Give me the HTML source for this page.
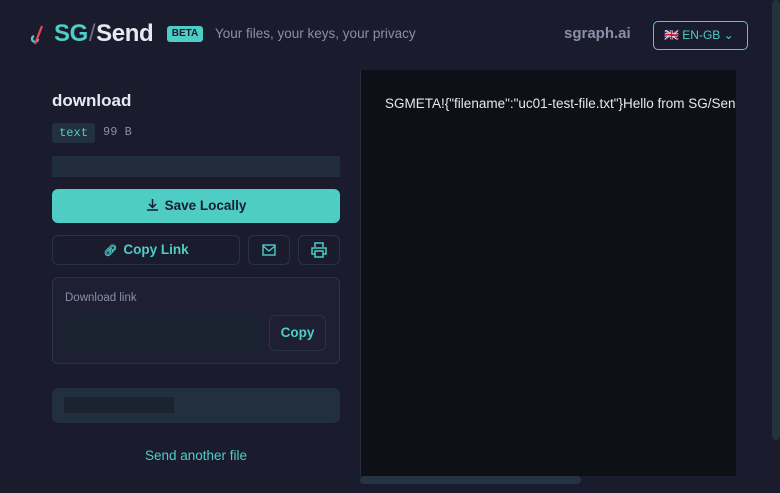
<!DOCTYPE html>
<html><head><style>
*{box-sizing:border-box;margin:0;padding:0}
body{width:780px;height:493px;overflow:hidden;background:#1b1b2e;font-family:"Liberation Sans",sans-serif;position:relative}
.a{position:absolute}
.btn{position:absolute;border:1px solid #283444;border-radius:6px}
</style></head><body>
<svg class="a" style="left:29px;top:23px" width="18" height="24" viewBox="0 0 18 24"><path d="M5 13a3 3 0 1 0 4 3" stroke="#4ecdc4" stroke-width="2.4" fill="none"/><path d="M13 3L6 21" stroke="#e94560" stroke-width="2.2"/></svg>
<div class="a" style="left:54px;top:20px;font-size:24px;font-weight:bold;color:#4ecdc4;letter-spacing:-0.4px">SG<span style="color:#6b7080;font-weight:normal;margin:0 1px">/</span><span style="color:#e8e8f0">Send</span></div>
<div class="a" style="left:167px;top:26px;width:36px;height:16px;background:#4ecdc4;border-radius:3px;color:#1b1b2e;font-size:10px;font-weight:bold;text-align:center;line-height:16px">BETA</div>
<div class="a" style="left:215px;top:26px;font-size:13.5px;color:#8a8fa8">Your files, your keys, your privacy</div>
<div class="a" style="left:564px;top:25px;font-size:15px;color:#8a8fa8;font-weight:bold">sgraph.ai</div>
<div class="a" style="left:653px;top:21px;width:95px;height:29px;border:1px solid #4ecdc4;border-radius:5px;color:#4ecdc4;font-size:12px;line-height:27px;padding-left:10px">🇬🇧 EN-GB ⌄</div>
<div class="a" style="left:772px;top:0;width:8px;height:440px;background:#243240;border-radius:4px"></div>
<div class="a" style="left:52px;top:91px;font-size:17px;font-weight:bold;color:#e8e8f0">download</div>
<div class="a" style="left:52px;top:123px;width:43px;height:20px;background:#223040;border-radius:3px;color:#4ecdc4;font:12px 'Liberation Mono',monospace;text-align:center;line-height:20px">text</div>
<div class="a" style="left:103px;top:125px;font:12px 'Liberation Mono',monospace;color:#8a8fa8">99 B</div>
<div class="a" style="left:52px;top:156px;width:288px;height:21px;background:#212d3c"></div>
<div class="a" style="left:52px;top:189px;width:288px;height:34px;background:#4ecdc4;border-radius:6px;color:#1b1b2e;font-size:13.5px;font-weight:bold;text-align:center;line-height:34px"><svg width="13" height="13" viewBox="0 0 13 13" style="vertical-align:-1px;margin-right:6px"><path d="M6.5 1v8M3 6l3.5 3.5L10 6M1 12h11" stroke="#1b1b2e" stroke-width="1.5" fill="none"/></svg>Save Locally</div>
<div class="btn" style="left:52px;top:235px;width:188px;height:30px;color:#4ecdc4;font-size:13.5px;font-weight:bold;text-align:center;line-height:28px"><span style="font-size:11px;margin-right:6px">🔗︎</span>Copy Link</div>
<div class="btn" style="left:248px;top:235px;width:42px;height:30px"><svg class="a" style="left:13px;top:8px" width="14" height="12" viewBox="0 0 14 12"><rect x="1" y="1" width="12" height="10" fill="none" stroke="#4ecdc4" stroke-width="1.4"/><path d="M1 2l6 5 6-5" fill="none" stroke="#4ecdc4" stroke-width="1.4"/></svg></div>
<div class="btn" style="left:298px;top:235px;width:42px;height:30px"><svg class="a" style="left:12px;top:6px" width="16" height="16" viewBox="0 0 16 16"><path d="M4 5V1h8v4M4 12H1V6h14v6h-3M4 9h8v6H4z" fill="none" stroke="#4ecdc4" stroke-width="1.5"/></svg></div>
<div class="btn" style="left:52px;top:277px;width:288px;height:87px;background:#1e1f32"></div>
<div class="a" style="left:65px;top:292px;font-size:11.5px;color:#8a8fa8">Download link</div>
<div class="a" style="left:65px;top:315px;width:196px;height:35px;background:#1b2230"></div>
<div class="btn" style="left:269px;top:315px;width:57px;height:36px;color:#4ecdc4;font-size:13.5px;font-weight:bold;text-align:center;line-height:34px">Copy</div>
<div class="a" style="left:52px;top:388px;width:288px;height:35px;background:#212f3e;border-radius:6px"></div>
<div class="a" style="left:64px;top:397px;width:110px;height:16px;background:#1b2330"></div>
<div class="a" style="left:52px;top:448px;width:288px;text-align:center;font-size:13.5px;color:#4ecdc4">Send another file</div>
<div class="a" style="left:360px;top:70px;width:376px;height:406px;background:#0d1017;border-left:1px solid #2a2e3c"></div>
<div class="a" style="left:385px;top:96px;font-size:13.5px;color:#e8e8f0;white-space:nowrap;width:351px;overflow:hidden">SGMETA!{"filename":"uc01-test-file.txt"}Hello from SG/Send</div>
<div class="a" style="left:360px;top:476px;width:221px;height:8px;background:#243442;border-radius:4px"></div>
</body></html>
